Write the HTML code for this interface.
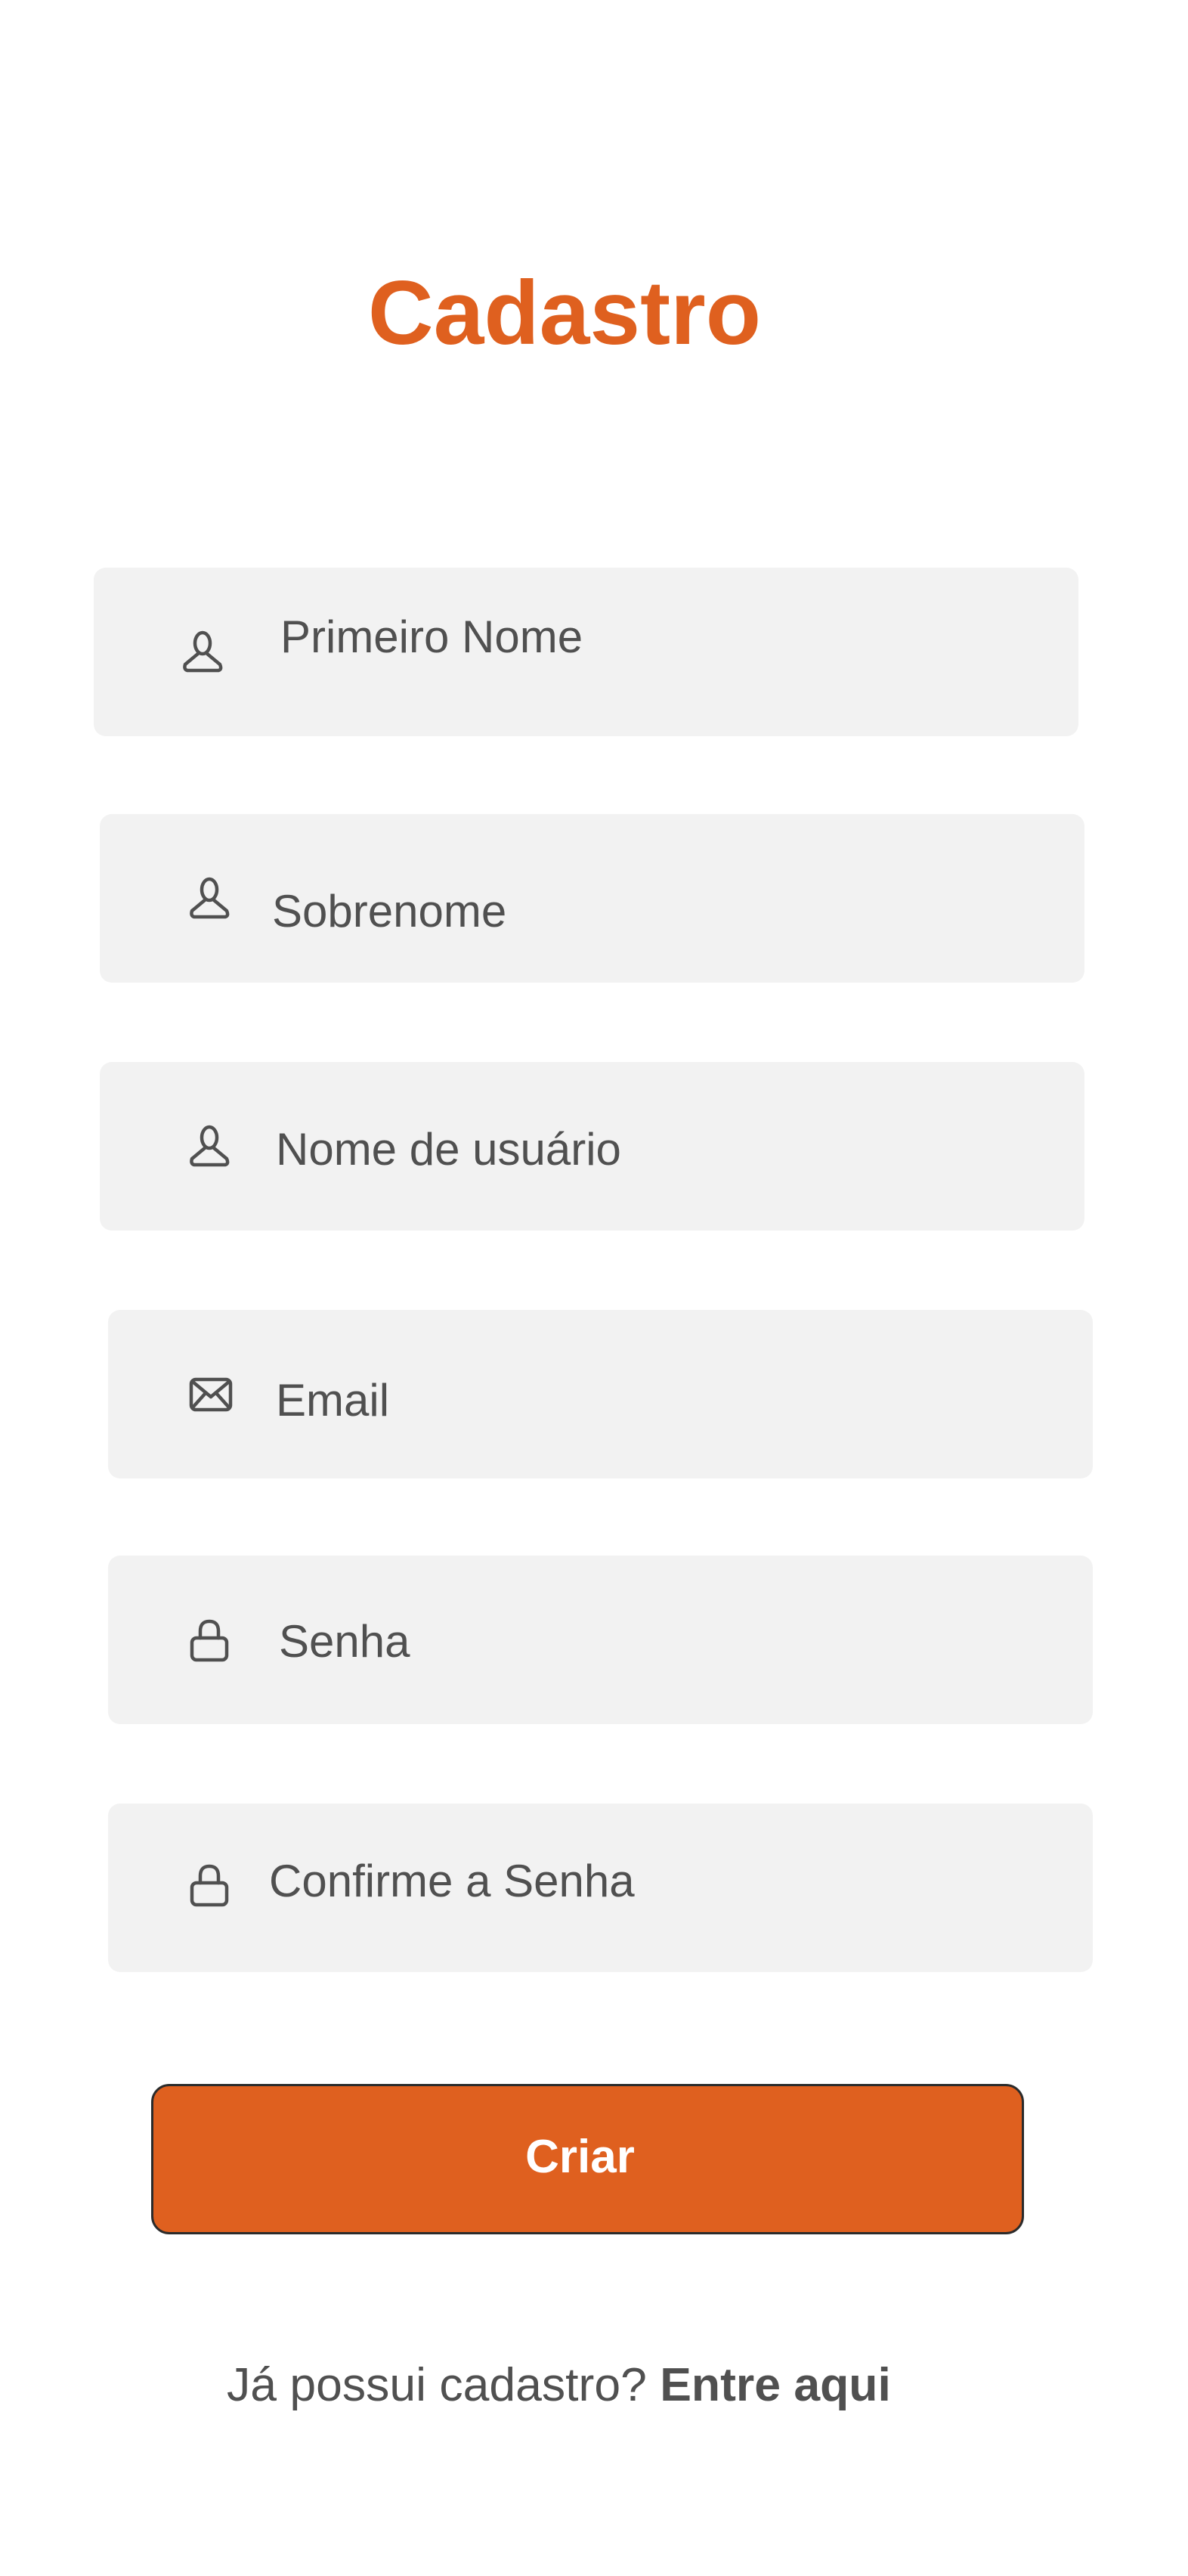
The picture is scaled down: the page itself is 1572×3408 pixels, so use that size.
<!DOCTYPE html>
<html><head><meta charset="utf-8"><style>
*{margin:0;padding:0;box-sizing:border-box}
body{width:1572px;height:3408px;background:#fff;position:relative;font-family:"Liberation Sans",Arial,sans-serif;overflow:hidden}
.t{position:absolute;line-height:1;white-space:nowrap}
.f{position:absolute;width:1303px;height:223px;background:#f2f2f2;border-radius:16px}
.l{font-size:60px;color:#505050}
svg{position:absolute;fill:none;stroke:#505050;stroke-width:4.5;stroke-linecap:round;stroke-linejoin:round}
</style></head><body>
<div class="t" style="left:0;width:1494px;text-align:center;top:354px;font-size:120px;font-weight:bold;color:#df601f">Cadastro</div>

<div class="f" style="left:124px;top:751px"></div>
<div class="f" style="left:132px;top:1077px"></div>
<div class="f" style="left:132px;top:1405px"></div>
<div class="f" style="left:143px;top:1733px"></div>
<div class="f" style="left:143px;top:2058px"></div>
<div class="f" style="left:143px;top:2386px"></div>

<svg style="left:239px;top:834px" width="58" height="58" viewBox="0 0 58 58"><ellipse cx="29" cy="17" rx="10" ry="14"/><path d="M24 30 L6 45 Q4 52 9 53 L50 53 Q55 52 52 45 L34 30"/></svg>
<svg style="left:248px;top:1160px" width="58" height="58" viewBox="0 0 58 58"><ellipse cx="29" cy="17" rx="10" ry="14"/><path d="M24 30 L6 45 Q4 52 9 53 L50 53 Q55 52 52 45 L34 30"/></svg>
<svg style="left:248px;top:1488px" width="58" height="58" viewBox="0 0 58 58"><ellipse cx="29" cy="17" rx="10" ry="14"/><path d="M24 30 L6 45 Q4 52 9 53 L50 53 Q55 52 52 45 L34 30"/></svg>
<svg style="left:250px;top:1822px" width="58" height="46" viewBox="0 0 58 46"><rect x="3" y="3" width="52" height="40" rx="6"/><path d="M5 6 L29 26 L53 6 M5 40 L22 21 M53 40 L36 21"/></svg>
<svg style="left:250px;top:2141px" width="54" height="58" viewBox="0 0 54 58"><path d="M15 26 V17 Q15 4 27 4 Q39 4 39 17 V26"/><rect x="4" y="26" width="46" height="29" rx="6"/></svg>
<svg style="left:250px;top:2465px" width="54" height="58" viewBox="0 0 54 58"><path d="M15 26 V17 Q15 4 27 4 Q39 4 39 17 V26"/><rect x="4" y="26" width="46" height="29" rx="6"/></svg>

<div class="t l" style="left:371px;top:813px">Primeiro Nome</div>
<div class="t l" style="left:360px;top:1176px">Sobrenome</div>
<div class="t l" style="left:365px;top:1491px">Nome de usuário</div>
<div class="t l" style="left:365px;top:1823px">Email</div>
<div class="t l" style="left:369px;top:2142px">Senha</div>
<div class="t l" style="left:356px;top:2459px">Confirme a Senha</div>

<div style="position:absolute;left:200px;top:2757px;width:1155px;height:199px;background:#df601f;border:3px solid #2b2b2b;border-radius:24px"></div>
<div class="t" style="left:190px;width:1155px;text-align:center;top:2823px;font-size:62px;font-weight:bold;color:#fff">Criar</div>

<div class="t" style="left:300px;top:3124px;font-size:62.5px;color:#505050">Já possui cadastro? <b>Entre aqui</b></div>
</body></html>
